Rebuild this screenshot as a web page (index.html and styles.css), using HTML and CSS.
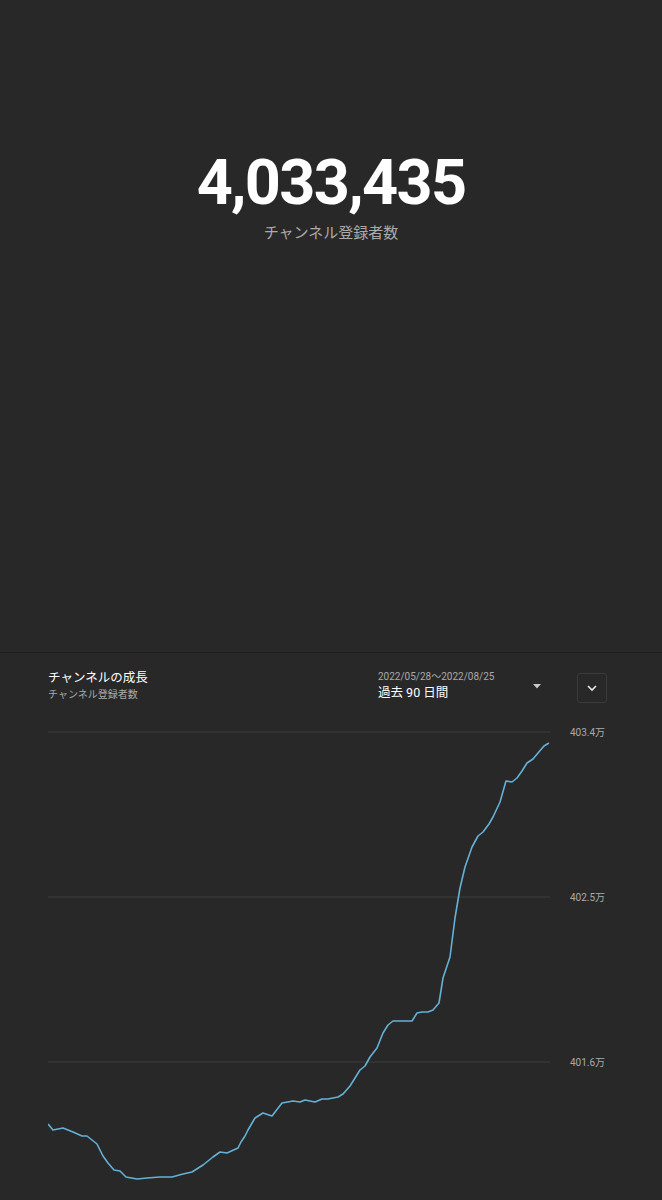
FILE: index.html
```html
<!DOCTYPE html>
<html lang="ja">
  <head>
    <meta charset="UTF-8" />
    <title>チャンネル登録者数</title>
    <meta name="viewport" content="width=device-width, initial-scale=1" />
    <link rel="stylesheet" href="styles.css">
  </head>

  <body>
    <!-- Live subscriber counter -->
    <div class="hero">
      <div class="count">4,033,435</div>
      <div class="count-label">チャンネル登録者数</div>
    </div>

    <!-- Growth chart -->
    <div class="card">
      <div class="card-header">
        <div class="title-block">
          <div class="card-title">チャンネルの成長</div>
          <div class="card-subtitle">チャンネル登録者数</div>
        </div>
        <div class="range">
          <div class="range-text">
            <div class="range-dates">2022/05/28〜2022/08/25</div>
            <div class="range-name">過去 90 日間</div>
          </div>
          <svg class="range-caret" width="10" height="5" viewBox="0 0 10 5">
            <path d="M1 0 L9 0 L5 4.5 Z" fill="#c8c8c8" />
          </svg>
        </div>
        <button class="expand-button">
          <svg width="12" height="8" viewBox="0 0 12 8">
            <path d="M2 2 L6 6 L10 2" fill="none" stroke="#e8e8e8" stroke-width="1.6" />
          </svg>
        </button>
      </div>

      <svg class="chart" width="559" height="488" viewBox="48 712 559 488">
        <line class="grid" x1="48" y1="732" x2="550" y2="732" />
        <line class="grid" x1="48" y1="897" x2="550" y2="897" />
        <line class="grid" x1="48" y1="1062" x2="550" y2="1062" />
        <text class="axis" x="570" y="735.5">403.4万</text>
        <text class="axis" x="570" y="900.5">402.5万</text>
        <text class="axis" x="570" y="1065.5">401.6万</text>
        <polyline class="series" points="
          48,1124 53,1130 63,1128 73,1132 82,1136 87,1136 92,1140 97,1144
          103,1156 108,1163 114,1170 120,1171 126,1177 137,1179 147,1178
          160,1177 172,1177 183,1174 192,1172 203,1165 213,1157 220,1152
          227,1153 238,1148 241,1142 245,1136 248,1130 255,1118 263,1113
          272,1116 282,1103 293,1101 300,1102 305,1100 315,1102 322,1099
          328,1099 338,1097 343,1094 350,1086 360,1070 365,1066 370,1057
          377,1048 383,1033 388,1025 393,1021 412,1021 417,1013 422,1012
          428,1012 433,1010 439,1003 443,978 450,957 455,918 460,888
          465,867 472,847 478,836 483,832 489,824 493,817 500,802 506,781
          512,782 517,778 522,771 527,763 533,759 538,753 544,746 549,743" />
      </svg>
    </div>
  </body>
</html>
```

FILE: styles.css
```css
body {
  margin: 0;
  background-color: #282828;
  color: #ffffff;
  font-family: Roboto, "Noto Sans CJK JP", sans-serif;
  overflow: hidden;
}

.hero {
  height: 507px;
  padding-top: 145px;
  border-bottom: 1px solid #1e1e1e;
  text-align: center;
}

.count {
  font-size: 63px;
  line-height: 76px;
  font-weight: 700;
  letter-spacing: -1.7px;
}

.count-label {
  margin-top: 1px;
  font-size: 15px;
  line-height: 22px;
  color: #aaaaaa;
}

.card {
  padding: 16px 55px 0 48px;
}

.card-header {
  display: flex;
  align-items: flex-start;
}

.title-block {
  flex: 1;
}

.card-title {
  font-size: 12.5px;
  line-height: 18px;
}

.card-subtitle {
  font-size: 10px;
  line-height: 16px;
  color: #aaaaaa;
}

.range {
  display: flex;
  align-items: center;
  width: 170px;
  margin-top: 1px;
}

.range-text {
  flex: 1;
}

.range-dates {
  font-size: 10px;
  line-height: 14px;
  color: #aaaaaa;
}

.range-name {
  font-size: 12.5px;
  line-height: 18px;
}

.range-caret {
  margin-right: 6px;
}

.expand-button {
  width: 30px;
  height: 30px;
  margin-left: 29px;
  margin-top: 4px;
  padding: 0;
  border: 1px solid #3a3a3a;
  border-radius: 3px;
  background-color: transparent;
  display: flex;
  align-items: center;
  justify-content: center;
}

.chart {
  display: block;
  margin-top: 9px;
}

.grid {
  stroke: #3c3c3c;
  stroke-width: 1;
}

.axis {
  font-size: 10px;
  fill: #aaaaaa;
  font-family: Roboto, "Noto Sans CJK JP", sans-serif;
}

.series {
  fill: none;
  stroke: #65b1d6;
  stroke-width: 1.6;
  stroke-linejoin: round;
}
```
